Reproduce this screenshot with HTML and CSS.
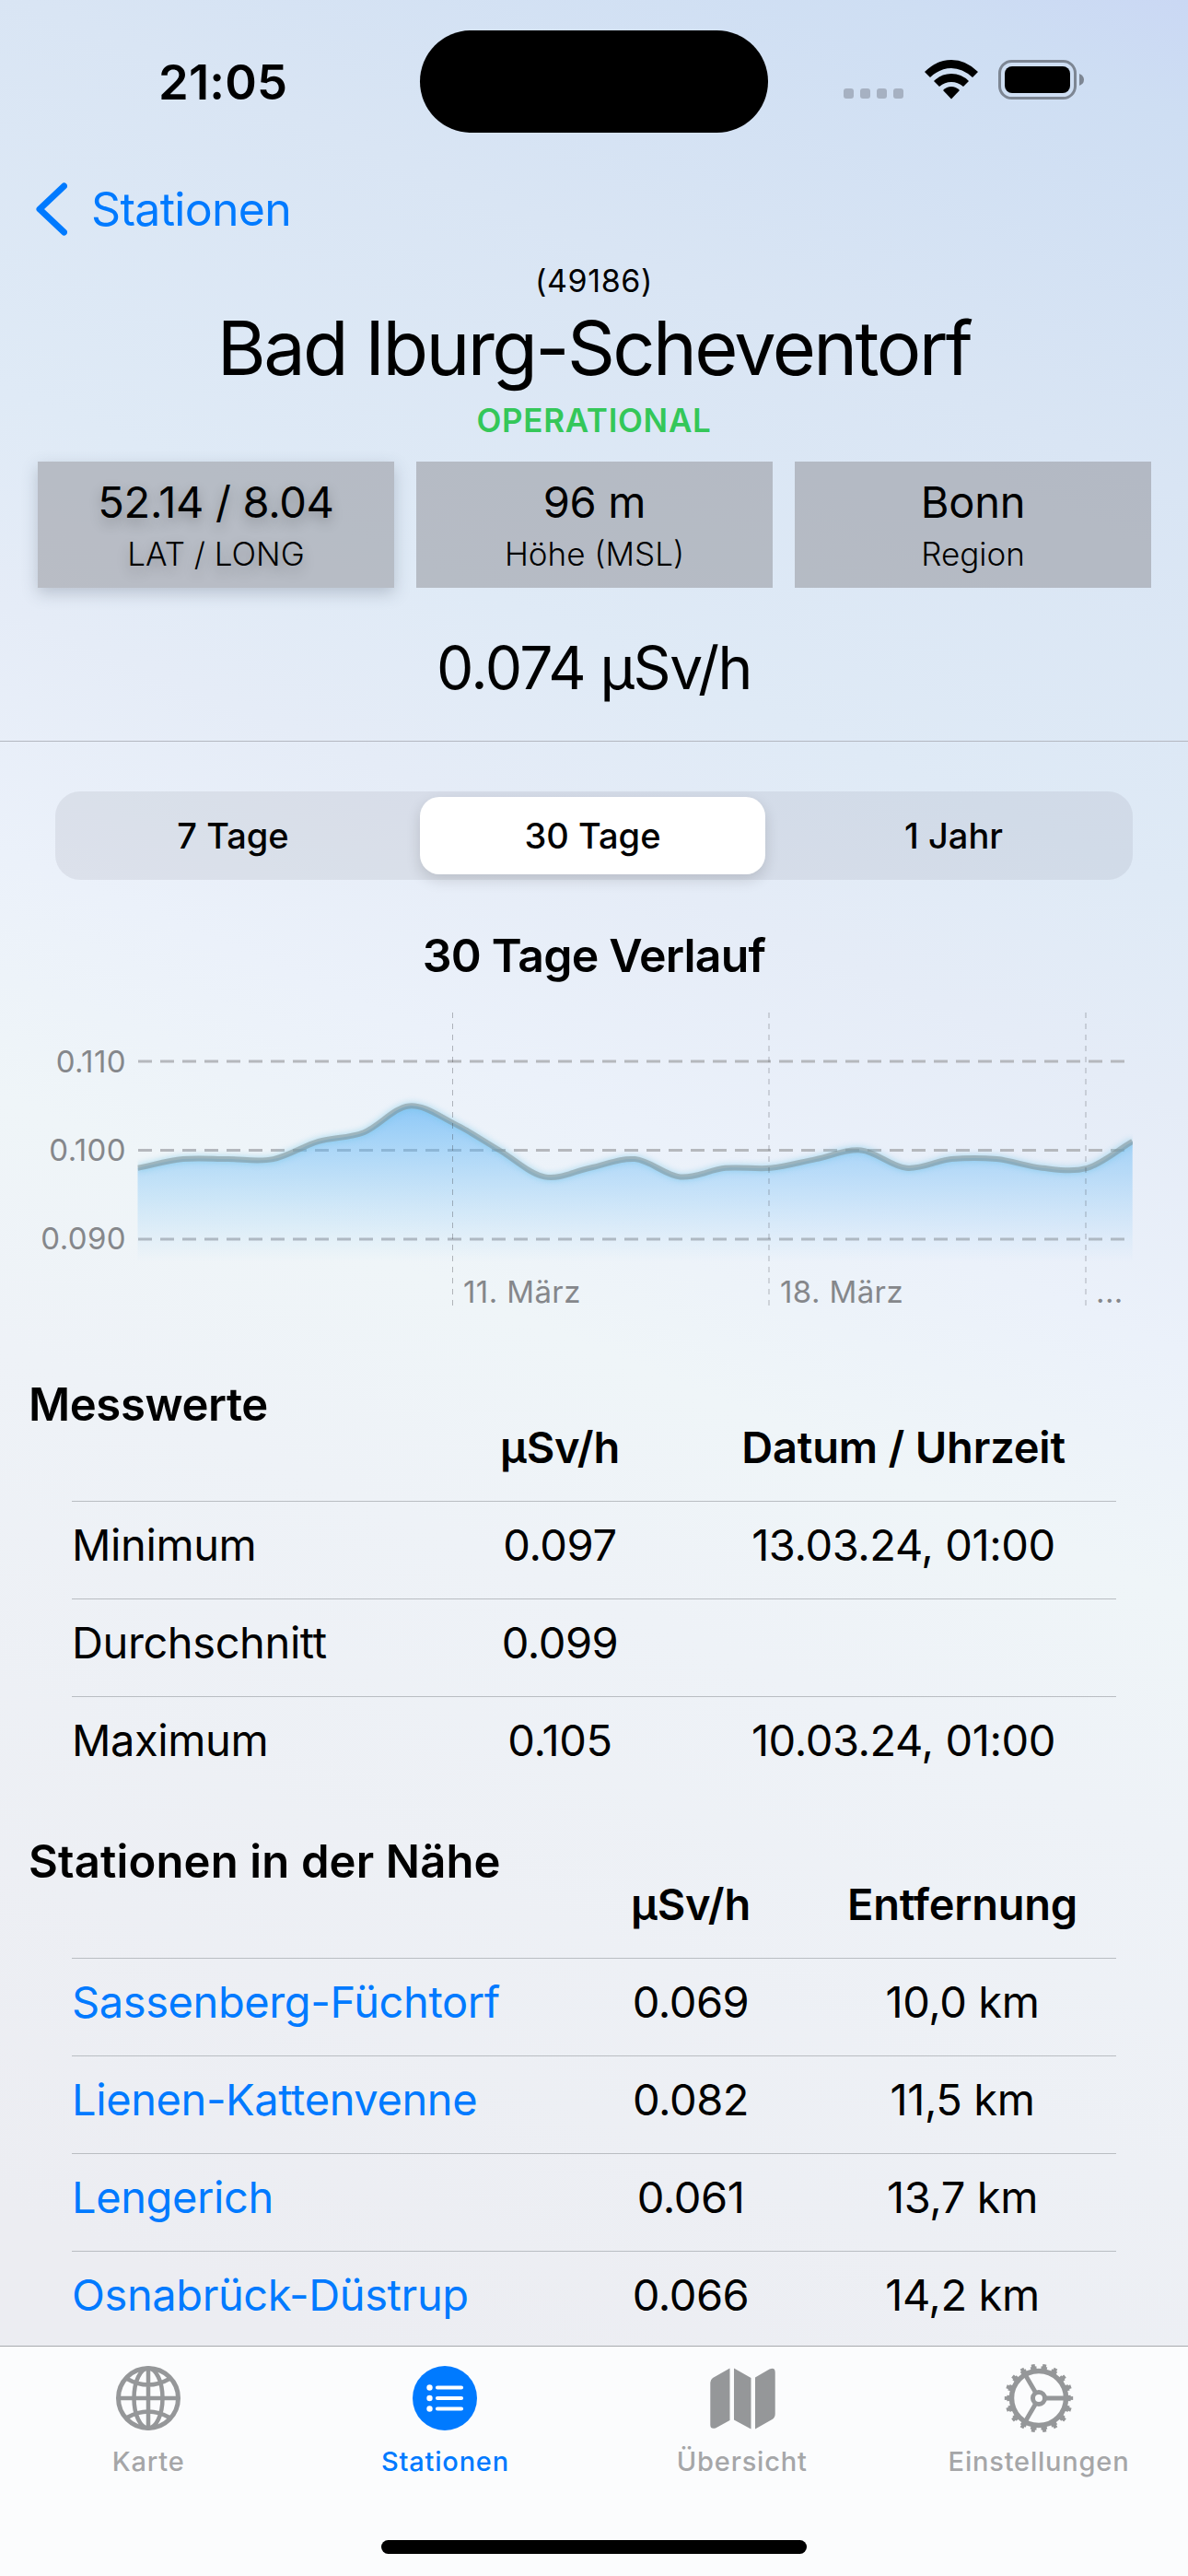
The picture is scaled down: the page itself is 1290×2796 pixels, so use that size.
FILE: index.html
```html
<!DOCTYPE html>
<html lang="de">
<head>
<meta charset="utf-8">
<title>Bad Iburg-Scheventorf</title>
<link rel="stylesheet" href="styles.css">
</head>
<body>
<div class="screen">
  <header class="status">
    <div class="time">21:05</div>
    <div class="island"></div>
    <div class="indicators">
      <svg class="signal" width="66" height="12" viewBox="0 0 66 12"><g fill="#a6b1c2"><rect x="0" width="11" height="11" rx="3"/><rect x="18" width="11" height="11" rx="3"/><rect x="36" width="11" height="11" rx="3"/><rect x="54" width="11" height="11" rx="3"/></g></svg>
      <svg class="wifi" width="58" height="43" viewBox="0 0 58 43"><path d="M0 13 Q13 0 29 0 Q45 0 58 13 L52 19 Q41 9 29 9 Q17 9 6 19Z"/><path d="M10 23 Q18 15 29 15 Q40 15 48 23 L42 29 Q36 24 29 24 Q22 24 16 29Z"/><path d="M20 33 Q24 29 29 29 Q34 29 38 33 L29 42.500Z"/></svg>
      <svg class="battery" width="94" height="43" viewBox="0 0 94 43"><rect x="1.500" y="1.500" width="82" height="40" rx="13" fill="none" stroke="#7d8693" stroke-width="3"/><rect x="7" y="7" width="71" height="29" rx="8"/><path d="M88 15 Q93 17 93 21.500 Q93 26 88 28Z" fill="#7d8693"/></svg>
    </div>
  </header>

  <nav class="back">
    <svg width="34" height="58" viewBox="0 0 34 58"><path d="M30.500 4 L4 29 L30.500 54" fill="none" stroke="#007aff" stroke-width="7" stroke-linecap="round" stroke-linejoin="round"/></svg>
    <span>Stationen</span>
  </nav>

  <section class="summary">
    <div class="code">(49186)</div>
    <h1>Bad Iburg-Scheventorf</h1>
    <div class="state">OPERATIONAL</div>
    <div class="cards">
      <div class="card lifted"><b>52.14 / 8.04</b><span>LAT / LONG</span></div>
      <div class="card"><b>96 m</b><span>Höhe (MSL)</span></div>
      <div class="card"><b>Bonn</b><span>Region</span></div>
    </div>
    <div class="reading">0.074 µSv/h</div>
  </section>

  <div class="segments">
    <div class="first">7 Tage</div><div class="on">30 Tage</div><div class="last">1 Jahr</div>
  </div>

  <h2 class="chart-title">30 Tage Verlauf</h2>
  <svg class="chart" width="1290" height="330" viewBox="0 0 1290 330">
    <defs>
      <linearGradient id="fill" gradientUnits="userSpaceOnUse" x1="0" y1="100" x2="0" y2="271">
        <stop offset="0" stop-color="#52aef5" stop-opacity=".62"/>
        <stop offset="1" stop-color="#6fc0f7" stop-opacity="0"/>
      </linearGradient>
      <filter id="glow" x="-5%" y="-30%" width="110%" height="160%"><feGaussianBlur stdDeviation="3.500"/></filter>
      <clipPath id="plot"><rect x="149.500" y="0" width="1080.500" height="271"/></clipPath>
      <path id="trend" d="M149.500 168.800 C165.900 165.600 182.200 160.700 198.600 159.100 S231.300 159.100 247.700 159.100 S280.400 162.300 296.800 159.100 S329.500 144.700 345.900 139.900 S378.600 136.600 395 130.200 S427.700 103 444.100 101.400 S476.800 112.600 493.200 120.600 S525.900 139.900 542.300 149.500 S575 175.200 591.400 178.400 S624.100 172 640.500 168.800 S673.200 157.500 689.600 159.100 S722.300 176.800 738.700 178.400 S771.400 170.400 787.800 168.800 S820.500 170.400 836.900 168.800 S869.600 162.300 886 159.100 S918.700 147.900 935.100 149.500 S967.800 167.200 984.200 168.800 S1016.900 160.700 1033.300 159.100 S1066 157.500 1082.400 159.100 S1115.100 167.200 1131.500 168.800 S1164.200 173.600 1180.600 168.800 S1213.300 149.500 1229.700 139.900"/>
    </defs>
    <g stroke="#b5b8bd" stroke-width="3" stroke-dasharray="15 9"><path d="M150 53H1223M150 149.500H1223M150 246H1223"/></g>
    <path fill="url(#fill)" d="M149.500 168.800 C165.900 165.600 182.200 160.700 198.600 159.100 S231.300 159.100 247.700 159.100 S280.400 162.300 296.800 159.100 S329.500 144.700 345.900 139.900 S378.600 136.600 395 130.200 S427.700 103 444.100 101.400 S476.800 112.600 493.200 120.600 S525.900 139.900 542.300 149.500 S575 175.200 591.400 178.400 S624.100 172 640.500 168.800 S673.200 157.500 689.600 159.100 S722.300 176.800 738.700 178.400 S771.400 170.400 787.800 168.800 S820.500 170.400 836.900 168.800 S869.600 162.300 886 159.100 S918.700 147.900 935.100 149.500 S967.800 167.200 984.200 168.800 S1016.900 160.700 1033.300 159.100 S1066 157.500 1082.400 159.100 S1115.100 167.200 1131.500 168.800 S1164.200 173.600 1180.600 168.800 S1213.300 149.500 1229.700 139.900 V271 H149.500Z"/>
    <g clip-path="url(#plot)" fill="none" stroke-width="6">
      <use href="#trend" stroke="#6cc3e6" opacity=".6" filter="url(#glow)"/>
      <use href="#trend" stroke="#7f9094" opacity=".55"/>
    </g>
    <g stroke="#3c3c43" stroke-opacity=".35" stroke-dasharray="6 6"><path d="M491.500 0V318M835 0V318M1179 0V318"/></g>
    <g class="axis" text-anchor="end"><text x="137" y="65">0.110</text><text x="137" y="161">0.100</text><text x="137" y="257">0.090</text></g>
    <g class="axis"><text x="503" y="315">11. März</text><text x="847" y="315">18. März</text><text x="1190" y="315">...</text></g>
  </svg>

  <section class="table values">
    <h3>Messwerte</h3>
    <div class="row head"><span></span><span>µSv/h</span><span>Datum / Uhrzeit</span></div>
    <div class="row"><span>Minimum</span><span>0.097</span><span>13.03.24, 01:00</span></div>
    <div class="row"><span>Durchschnitt</span><span>0.099</span><span></span></div>
    <div class="row"><span>Maximum</span><span>0.105</span><span>10.03.24, 01:00</span></div>
  </section>

  <section class="table nearby">
    <h3>Stationen in der Nähe</h3>
    <div class="row head"><span></span><span>µSv/h</span><span>Entfernung</span></div>
    <div class="row"><a>Sassenberg-Füchtorf</a><span>0.069</span><span>10,0 km</span></div>
    <div class="row"><a>Lienen-Kattenvenne</a><span>0.082</span><span>11,5 km</span></div>
    <div class="row"><a>Lengerich</a><span>0.061</span><span>13,7 km</span></div>
    <div class="row"><a>Osnabrück-Düstrup</a><span>0.066</span><span>14,2 km</span></div>
  </section>

  <footer class="tabs">
    <div class="tab">
      <svg width="80" height="80" viewBox="-40 -40 80 80"><g fill="none" stroke="#959799" stroke-width="4.500"><circle r="32.500" stroke-width="5"/><path d="M0 -32V32M-32 0H32M-23 -21Q0 -8 23 -21M-23 21Q0 8 23 21"/><ellipse rx="15.500" ry="32.500"/></g></svg>
      <span>Karte</span>
    </div>
    <div class="tab active">
      <svg width="80" height="80" viewBox="-40 -40 80 80"><circle r="35" fill="#007aff"/><g fill="#fff"><circle cx="-16.500" cy="-11.500" r="3.200"/><circle cx="-16.500" r="3.200"/><circle cx="-16.500" cy="11.500" r="3.200"/></g><path d="M-8 -11.500H18M-8 0H18M-8 11.500H18" stroke="#fff" stroke-width="4.200" stroke-linecap="round"/></svg>
      <span>Stationen</span>
    </div>
    <div class="tab">
      <svg width="80" height="80" viewBox="-40 -40 80 80"><path fill="#959799" d="M-13.500 -32.500V24L-29 32.500Q-34.700 34 -34.700 29V-17Q-34.700 -20 -32 -22ZM-9 -32.500L9.500 -22V33.500L-9 23.500ZM14 -22.500L29.500 -31.500Q35.700 -34 35.700 -28V17Q35.700 21 32.500 23L14 33.500Z"/></svg>
      <span>Übersicht</span>
    </div>
    <div class="tab">
      <svg width="80" height="80" viewBox="-40 -40 80 80"><g fill="none" stroke="#959799"><circle r="29.500" stroke-width="5.500"/><circle r="6.500" stroke-width="5"/><circle r="33" stroke-width="3.500" pathLength="180" stroke-dasharray="5.600 4.400" stroke-dashoffset="2.800"/><circle r="35.500" stroke-width="3.400" pathLength="180" stroke-dasharray="3.200 6.800" stroke-dashoffset="1.600"/><path stroke-width="4.800" d="M8 0H28M-4 -7L-14.500 -25M-4 7L-14.500 25"/></g></svg>
      <span>Einstellungen</span>
    </div>
    <div class="home"></div>
  </footer>
</div>
</body>
</html>
```
FILE: styles.css
```css
* { box-sizing: border-box; }
body { margin: 0; font-family: Inter, "Liberation Sans", sans-serif; color: #000; }
h1, h2, h3 { margin: 0; }
.screen {
  width: 1290px; height: 2796px; overflow: hidden;
  display: flex; flex-direction: column;
  background: linear-gradient(203deg, #cad8f4 0%, #cedef3 4%, #d9e5f4 16%, #dfeaf6 29%, #e5ecf7 36%, #ebf1fa 44%, #eff5f8 52%, #eef2f7 60%, #ecedf2 88%);
}
.status { height: 178px; flex: none; display: grid; grid-template-columns: 456px 378px 456px; }
.time { padding: 57px 0 0 172px; font-size: 52.500px; line-height: 64px; font-weight: 600; letter-spacing: .2px; }
.island { margin-top: 33px; height: 111px; border-radius: 56px; background: #000; }
.indicators { display: flex; align-items: flex-end; height: 108px; padding-left: 82px; }
.wifi { margin-left: 22px; }
.battery { margin-left: 22px; }

.back { height: 98px; margin-bottom: 2px; flex: none; display: flex; align-items: center; gap: 26px; padding-left: 39px; font-size: 50px; letter-spacing: -.7px; color: #007aff; }

.summary { height: 527px; flex: none; display: flex; flex-direction: column; align-items: center; border-bottom: 1px solid #b3b7c0; }
.code { margin-top: 5px; height: 44px; line-height: 44px; font-size: 34px; letter-spacing: .6px; }
h1 { height: 100px; line-height: 103px; font-size: 81px; font-weight: 400; letter-spacing: -2.600px; }
.state { height: 74px; line-height: 58px; font-size: 35px; font-weight: 600; letter-spacing: .7px; color: #34c759; }
.cards { align-self: stretch; height: 137px; display: grid; grid-template-columns: repeat(3, 1fr); gap: 24px; padding: 0 40px 0 41px; }
.card { background: rgba(142, 142, 147, .5); display: flex; flex-direction: column; align-items: center; padding-top: 15px; }
.card b { font-weight: 400; font-size: 47px; line-height: 57px; letter-spacing: -.3px; }
.card span { margin-top: 5px; font-weight: 300; font-size: 35px; line-height: 46px; }
.lifted { box-shadow: 0 6px 16px rgba(60, 70, 90, .25); text-shadow: 0 6px 14px rgba(0, 0, 0, .25); }
.reading { margin-top: 47px; line-height: 80px; font-size: 64px; letter-spacing: -1.500px; }

.segments { margin: 54px 60px 0; height: 96px; flex: none; border-radius: 27px; padding: 6px; background: rgba(118, 118, 128, .12); display: grid; grid-template-columns: 390px 375px 1fr; font-size: 38px; font-weight: 500; }
.segments div { display: flex; align-items: center; justify-content: center; }
.segments .first { padding-right: 16px; }
.segments .last { padding-left: 16px; }
.segments .on { background: #fff; border-radius: 21px; box-shadow: 0 6px 16px rgba(0, 0, 0, .14); }

.chart-title { margin-top: 52px; height: 61px; line-height: 60px; text-align: center; font-size: 50px; font-weight: 600; letter-spacing: -.8px; }
.chart { margin-top: 31px; flex: none; display: block; }
.axis { font-size: 33px; letter-spacing: .4px; fill: #85878b; }

.table { flex: none; font-size: 47px; letter-spacing: -.4px; }
.table h3 { height: 60px; line-height: 60px; padding-left: 31px; font-size: 49px; font-weight: 600; letter-spacing: -.4px; }
.row { display: grid; height: 106px; line-height: 93px; margin: 0 78px; border-top: 1px solid #b9bdc2; }
.row > :not(:first-child) { text-align: center; }
.row.head { border: 0; height: 75px; line-height: 34px; margin-top: -1px; font-weight: 600; letter-spacing: -.2px; }
.row a { color: #007aff; }
.values { height: 496px; margin-top: 66px; }
.nearby { height: 555px; }
.nearby h3 { letter-spacing: .15px; }
.values .row { grid-template-columns: 388px 284px 462px; }
.nearby .row { grid-template-columns: 540px 264px 326px; }

.tabs { flex: none; height: 250px; background: #fbfcfd; border-top: 1px solid #a7aaae; display: grid; grid-template-columns: repeat(4, 322.300px); grid-template-rows: 210px 15px; }
.tab { display: flex; flex-direction: column; align-items: center; padding-top: 16px; font-size: 29px; line-height: 40px; font-weight: 500; color: #a5a6a8; letter-spacing: .8px; }
.tab span { margin-top: 9px; }
.active { color: #007aff; }
.home { grid-column: 1 / -1; width: 462px; height: 15px; margin-left: 414px; border-radius: 8px; background: #000; }
```
